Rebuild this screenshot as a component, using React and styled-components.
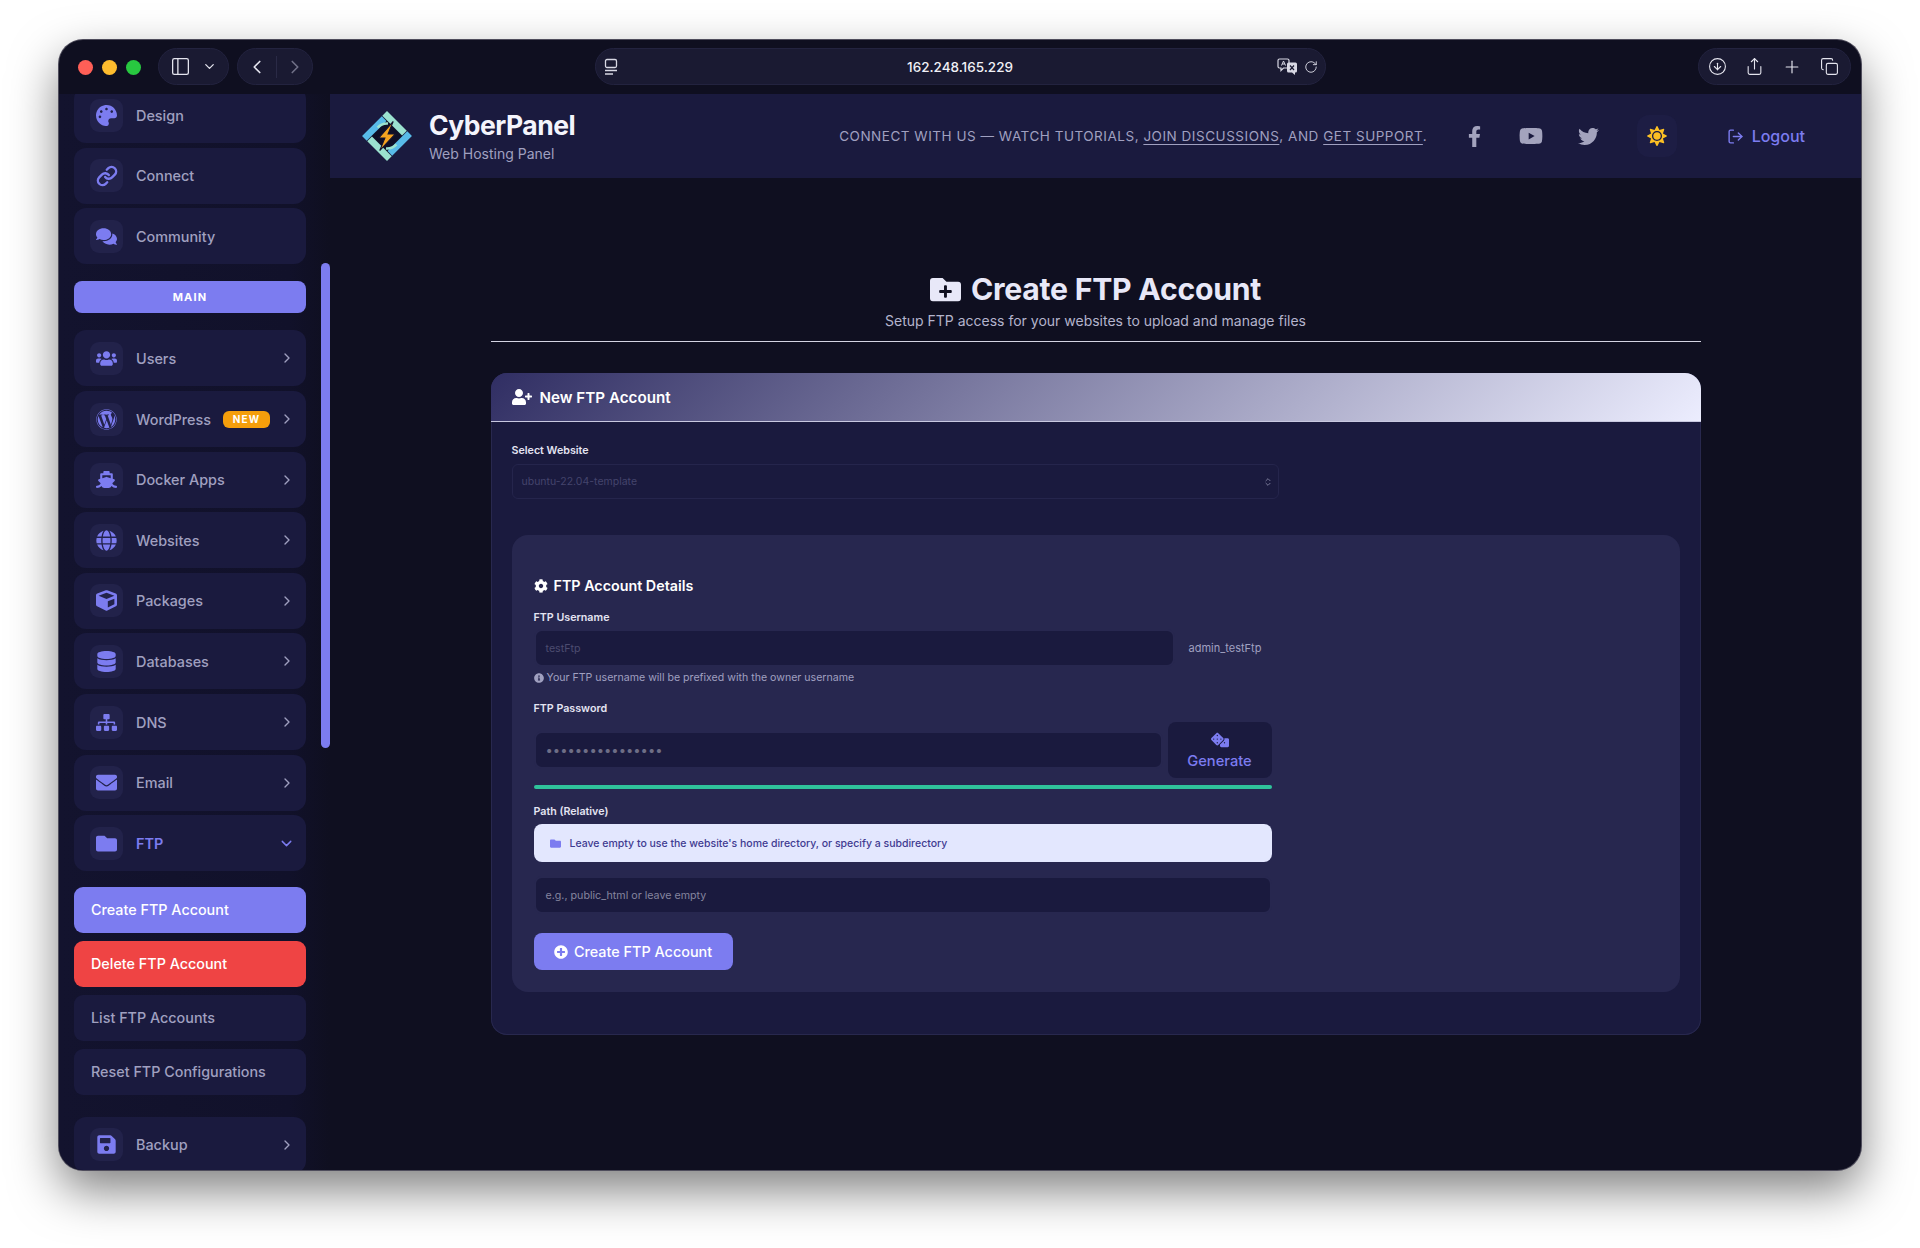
import React from 'react';
import styled, { createGlobalStyle } from 'styled-components';
import {
  FaPalette, FaComments, FaUsers, FaWordpress, FaShip, FaGlobe, FaCube, FaDatabase,
  FaSitemap, FaEnvelope, FaFolder, FaSave, FaFacebookF, FaYoutube, FaTwitter, FaSun,
  FaFolderPlus, FaUserPlus, FaCog, FaInfoCircle, FaDice, FaPlusCircle,
} from 'react-icons/fa';
import {
  PanelLeft, ChevronDown, ChevronLeft, ChevronRight, ChevronsUpDown, LogOut,
  RotateCw, Share, Plus, Copy, CircleArrowDown, Link,
} from 'lucide-react';

const accent = '#7c7cf0';
const muted = '#a0a0c0';
const cardBg = '#1a1a3e';
const panelBg = '#27274f';

const GlobalStyle = createGlobalStyle`
  html, body {
    margin: 0;
    background: #fff;
  }
  * {
    box-sizing: border-box;
  }
  body {
    font-family: Inter, "Liberation Sans", sans-serif;
  }
`;

const Page = styled.div`
  width: 1920px;
  height: 1248px;
  padding: 40px 59px 78px 59px;
  overflow: hidden;
`;

const Window = styled.div`
  height: 100%;
  display: flex;
  flex-direction: column;
  border-radius: 24px;
  overflow: hidden;
  background: #0f0f20;
  box-shadow: 0 0 0 1px #4f4d5c, 0 20px 48px rgba(0, 0, 0, 0.5);
`;

const Toolbar = styled.div`
  height: 54px;
  flex: none;
  display: flex;
  align-items: center;
  padding: 0 10px 0 19px;
`;

const Lights = styled.div`
  display: flex;
  gap: 9px;
  margin-right: 17px;
`;

const Light = styled.span`
  width: 15px;
  height: 15px;
  border-radius: 50%;
  background: ${props => props.$color};
`;

const Pill = styled.div`
  height: 37px;
  display: flex;
  align-items: center;
  border-radius: 19px;
  background: #1a1a32;
  border: 1px solid #23233f;
  color: #e4e4ee;
  margin-top: -1px;
`;

const ViewPill = styled(Pill)`
  width: 71px;
  padding: 0 11px;
  justify-content: space-between;
  margin-right: 8px;
`;

const NavPill = styled(Pill)`
  width: 76px;
  padding: 0 6px 0 8px;
  justify-content: space-between;
`;

const NavDivider = styled.span`
  width: 1px;
  height: 22px;
  background: #2a2a46;
`;

const AddressBar = styled(Pill)`
  width: 731px;
  margin-left: 282px;
  padding: 0 7px 0 7px;
  justify-content: space-between;
`;

const Url = styled.span`
  font-size: 13.5px;
  font-weight: 500;
  color: #f0f0f6;
  margin-left: 24px;
`;

const AddressIcons = styled.div`
  display: flex;
  align-items: center;
  gap: 6px;
`;

const ActionPill = styled(Pill)`
  width: 153px;
  margin-left: auto;
  justify-content: space-between;
  padding: 0 11px 0 9px;
`;

const Body = styled.div`
  flex: 1;
  min-height: 0;
  display: flex;
`;

const Sidebar = styled.aside`
  width: 271px;
  flex: none;
  position: relative;
  overflow: hidden;
  padding-left: 15px;
  background: linear-gradient(90deg, #13132e 0%, #11112a 85%, #0f0f20 100%);
`;

const SideScroll = styled.div`
  width: 232px;
  margin-top: -7px;
`;

const ScrollThumb = styled.div`
  position: absolute;
  top: 169px;
  right: 0;
  width: 9px;
  height: 485px;
  border-radius: 5px;
  background: ${accent};
`;

const NavItem = styled.div`
  height: 56px;
  margin-bottom: 4.6px;
  display: flex;
  align-items: center;
  padding: 0 11px 0 16px;
  border-radius: 12px;
  background: ${cardBg};
  color: ${props => (props.$active ? accent : muted)};
  font-size: 14.4px;
  font-weight: ${props => (props.$active ? 600 : 500)};
`;

const NavIcon = styled.span`
  width: 33px;
  height: 33px;
  flex: none;
  display: flex;
  align-items: center;
  justify-content: center;
  border-radius: 9px;
  background: #22224a;
  color: ${accent};
  font-size: 21px;
  margin-right: 13px;
`;

const NavLabel = styled.span`
  margin-right: auto;
`;

const NewBadge = styled.span`
  width: 47px;
  height: 17px;
  display: flex;
  align-items: center;
  justify-content: center;
  margin-right: 9px;
  border-radius: 6px;
  background: #f59e0b;
  color: #fff;
  font-size: 10px;
  font-weight: 700;
  letter-spacing: 1.2px;
`;

const SectionPill = styled.div`
  height: 32px;
  margin: 17.3px 0 17px;
  display: flex;
  align-items: center;
  justify-content: center;
  border-radius: 8px;
  background: ${accent};
  color: #fff;
  font-size: 11px;
  font-weight: 700;
  letter-spacing: 1.2px;
`;

const SubMenu = styled.div`
  display: flex;
  flex-direction: column;
  gap: 8px;
  margin: 15.6px 0 22px;
`;

const SubItem = styled.div`
  height: 46px;
  display: flex;
  align-items: center;
  padding-left: 17px;
  border-radius: 9px;
  font-size: 14.35px;
  font-weight: 500;
  color: ${props => (props.$bg ? '#fff' : muted)};
  background: ${props => props.$bg || cardBg};
`;

const Main = styled.main`
  flex: 1;
  min-width: 0;
  display: flex;
  flex-direction: column;
`;

const Header = styled.header`
  height: 84px;
  flex: none;
  display: flex;
  align-items: center;
  padding: 0 56px 0 31px;
  background: ${cardBg};
`;

const Brand = styled.div`
  display: flex;
  align-items: center;
  gap: 16px;
  margin-right: 264px;
`;

const BrandName = styled.div`
  font-size: 26.5px;
  line-height: 32px;
  font-weight: 700;
  letter-spacing: -0.5px;
  color: #f4f4fc;
`;

const BrandSub = styled.div`
  margin-top: 3px;
  font-size: 14px;
  line-height: 20px;
  color: ${muted};
`;

const Tagline = styled.div`
  font-size: 13.5px;
  letter-spacing: 0.52px;
  color: ${muted};
  white-space: nowrap;

  a {
    color: inherit;
    text-decoration: underline;
    text-underline-offset: 3px;
  }
`;

const Socials = styled.div`
  display: flex;
  align-items: center;
  margin-left: 18.5px;
  color: #a3a3bd;
`;

const SocialLink = styled.span`
  width: 57px;
  display: flex;
  justify-content: center;
  font-size: ${props => props.$size}px;
`;

const ThemeToggle = styled.span`
  width: 40px;
  height: 42px;
  margin-left: 20px;
  display: flex;
  align-items: center;
  justify-content: center;
  border-radius: 12px;
  background: #1d1d44;
  color: #fbbf24;
  font-size: 20px;
`;

const Logout = styled.div`
  display: flex;
  align-items: center;
  gap: 8px;
  color: ${accent};
  font-size: 16px;
  font-weight: 500;
  margin-left: auto;
`;

const Content = styled.div`
  width: 1210px;
  margin: 0 auto;
  padding-top: 91px;
`;

const PageHead = styled.div`
  text-align: center;
  padding-bottom: 10px;
  border-bottom: 1px solid #d4d4e2;
  margin-bottom: 31px;
`;

const PageTitle = styled.h1`
  margin: 0;
  display: flex;
  align-items: center;
  justify-content: center;
  gap: 10px;
  font-size: 30.2px;
  line-height: 40px;
  font-weight: 700;
  letter-spacing: -0.25px;
  color: #e8e8f8;
`;

const PageSub = styled.p`
  margin: 2px 0 0;
  font-size: 14px;
  line-height: 20px;
  color: #b4b4cc;
`;

const Card = styled.section`
  height: 662px;
  border-radius: 16px;
  overflow: hidden;
  background: ${cardBg};
  box-shadow: inset 0 0 0 1px #28284e;
`;

const CardHead = styled.div`
  height: 49px;
  display: flex;
  align-items: center;
  gap: 8px;
  padding-left: 21px;
  font-size: 15.2px;
  font-weight: 600;
  color: #fff;
  background: linear-gradient(135deg, #302e63 0%, #ecedfe 100%);
  border-bottom: 1px solid #c8c8e0;
`;

const CardBody = styled.div`
  padding: 22px 21px 0;
`;

const Label = styled.div`
  font-size: 10.7px;
  line-height: 14px;
  font-weight: 600;
  color: #e4e4f2;
  margin-bottom: ${props => props.$gap ?? 6}px;
`;

const Select = styled.div`
  width: 767px;
  height: 35px;
  display: flex;
  align-items: center;
  justify-content: space-between;
  padding: 0 5px 0 9px;
  border-radius: 6px;
  border: 1px solid #25254c;
  font-size: 10.5px;
  color: #44446c;
`;

const Panel = styled.div`
  height: 457px;
  margin-top: 36px;
  padding: 41px 22px 0;
  border-radius: 16px;
  background: ${panelBg};
`;

const Form = styled.div`
  width: 738px;
`;

const PanelTitle = styled.h3`
  margin: 0 0 15px;
  display: flex;
  align-items: center;
  gap: 6px;
  font-size: 14.3px;
  line-height: 20px;
  font-weight: 600;
  color: #fff;
`;

const Row = styled.div`
  display: flex;
  align-items: center;
`;

const Field = styled.div`
  height: 38px;
  flex: 1;
  display: flex;
  align-items: center;
  padding-left: 10px;
  border-radius: 8px;
  border: 2px solid ${panelBg};
  background: ${cardBg};
  font-size: 10.7px;
  color: ${props => props.$color};
`;

const PasswordField = styled(Field)`
  font-size: 13px;
  color: #6e6e86;
`;

const Addon = styled.span`
  width: 97px;
  flex: none;
  padding-left: 14px;
  font-size: 11px;
  color: ${muted};
`;

const Hint = styled.div`
  margin: 4px 0 17px;
  display: flex;
  align-items: center;
  gap: 3px;
  font-size: 10.6px;
  line-height: 14px;
  color: ${muted};
`;

const GenerateButton = styled.div`
  width: 104px;
  height: 56px;
  flex: none;
  margin-left: 5px;
  display: flex;
  flex-direction: column;
  align-items: center;
  justify-content: center;
  gap: 3px;
  border-radius: 8px;
  background: ${cardBg};
  color: ${accent};
  font-size: 14.7px;
  font-weight: 500;
`;

const Strength = styled.div`
  height: 4px;
  margin: 7px 0 16px;
  border-radius: 2px;
  background: #2fc39b;
`;

const InfoBox = styled.div`
  height: 38px;
  display: flex;
  align-items: center;
  gap: 9px;
  padding-left: 16px;
  border-radius: 8px;
  background: #e3e7fe;
  color: #3f3b91;
  font-size: 10.5px;
  font-weight: 500;
  margin-bottom: 14px;
`;

const SubmitButton = styled.div`
  width: 199px;
  height: 37px;
  margin-top: 19px;
  display: flex;
  align-items: center;
  justify-content: center;
  gap: 6px;
  border-radius: 8px;
  background: ${accent};
  color: #fff;
  font-size: 14.4px;
  font-weight: 500;
`;

const CyberLogo = () => (
  <svg width="52" height="52" viewBox="0 0 50 50">
    <circle cx="25" cy="25" r="17" fill="#0f0f26" />
    {[0, 90, 180, 270].map((angle, i) => (
      <polygon
        key={angle}
        points="1,25 20,6 24.5,10.5 5.5,29.5"
        fill={i % 2 ? '#9be2cf' : '#58bbe8'}
        transform={`rotate(${angle} 25 25)`}
      />
    ))}
    <path d="M16 17a12 12 0 0 1 10-4M34 33a12 12 0 0 1-10 4" fill="none" stroke="#9be2cf" strokeWidth="2.5" />
    <polygon points="31,11 17,27 23,27 18,39 33,23 26,23" fill="#f5a31f" stroke="#14142e" strokeWidth="1" />
  </svg>
);

const ReaderIcon = () => (
  <svg width="16" height="18" viewBox="0 0 16 18" fill="none" stroke="#d8d8e4" strokeWidth="1.3">
    <rect x="2.5" y="1.5" width="11" height="8" rx="1.5" />
    <path d="M2 12.5h12M2 16h8" />
  </svg>
);

const TranslateIcon = () => (
  <svg width="21" height="17" viewBox="0 0 21 17">
    <path d="M2.5 1h8A1.5 1.5 0 0 1 12 2.5v6A1.5 1.5 0 0 1 10.5 10h-4L4 12.5V10H2.5A1.5 1.5 0 0 1 1 8.5v-6A1.5 1.5 0 0 1 2.5 1z" fill="none" stroke="#d8d8e4" strokeWidth="1.2" />
    <path d="M4.5 7.5l2-4.500 2 4.500M5.3 6h2.400" fill="none" stroke="#d8d8e4" strokeWidth="1" />
    <path d="M11.5 4.5h7A1.5 1.5 0 0 1 20 6v7a1.5 1.5 0 0 1-1.5 1.5H18V17l-3-2.5h-3.5A1.5 1.5 0 0 1 10 13V6a1.5 1.5 0 0 1 1.5-1.5z" fill="#d8d8e4" />
    <path d="M13 7.500l4 4.500M17 7.500l-4 4.500" stroke="#1a1a32" strokeWidth="1.2" />
  </svg>
);

const ConnectIcon = () => <Link size={22} strokeWidth={2.6} />;

const topItems = [
  { label: 'Design', icon: FaPalette },
  { label: 'Connect', icon: ConnectIcon },
  { label: 'Community', icon: FaComments },
];

const mainItems = [
  { label: 'Users', icon: FaUsers },
  { label: 'WordPress', icon: FaWordpress, badge: 'NEW' },
  { label: 'Docker Apps', icon: FaShip },
  { label: 'Websites', icon: FaGlobe },
  { label: 'Packages', icon: FaCube },
  { label: 'Databases', icon: FaDatabase },
  { label: 'DNS', icon: FaSitemap },
  { label: 'Email', icon: FaEnvelope },
];

const subItems = [
  { label: 'Create FTP Account', bg: accent },
  { label: 'Delete FTP Account', bg: '#ef4444' },
  { label: 'List FTP Accounts' },
  { label: 'Reset FTP Configurations' },
];

const SideLink = ({ item, chevron, active }) => {
  const Icon = item.icon;
  return (
    <NavItem $active={active}>
      <NavIcon><Icon /></NavIcon>
      <NavLabel>{item.label}</NavLabel>
      {item.badge && <NewBadge>{item.badge}</NewBadge>}
      {chevron === 'right' && <ChevronRight size={16} />}
      {chevron === 'down' && <ChevronDown size={17} />}
    </NavItem>
  );
};

const App = () => (
  <Page>
    <GlobalStyle />
    <Window>
      <Toolbar>
        <Lights>
          <Light $color="#ff5f57" />
          <Light $color="#febc2e" />
          <Light $color="#28c840" />
        </Lights>
        <ViewPill>
          <PanelLeft size={21} strokeWidth={1.5} />
          <ChevronDown size={15} />
        </ViewPill>
        <NavPill>
          <ChevronLeft size={22} strokeWidth={1.8} />
          <NavDivider />
          <ChevronRight size={22} strokeWidth={1.8} color="#6f6f86" />
        </NavPill>
        <AddressBar>
          <ReaderIcon />
          <Url>162.248.165.229</Url>
          <AddressIcons>
            <TranslateIcon />
            <RotateCw size={14} strokeWidth={1.5} />
          </AddressIcons>
        </AddressBar>
        <ActionPill>
          <CircleArrowDown size={19} strokeWidth={1.4} />
          <Share size={19} strokeWidth={1.4} />
          <Plus size={20} strokeWidth={1.4} />
          <Copy size={19} strokeWidth={1.4} />
        </ActionPill>
      </Toolbar>
      <Body>
        <Sidebar>
          <SideScroll>
            {topItems.map(item => <SideLink key={item.label} item={item} />)}
            <SectionPill>MAIN</SectionPill>
            {mainItems.map(item => <SideLink key={item.label} item={item} chevron="right" />)}
            <SideLink item={{ label: 'FTP', icon: FaFolder }} chevron="down" active />
            <SubMenu>
              {subItems.map(item => <SubItem key={item.label} $bg={item.bg}>{item.label}</SubItem>)}
            </SubMenu>
            <SideLink item={{ label: 'Backup', icon: FaSave }} chevron="right" />
          </SideScroll>
          <ScrollThumb />
        </Sidebar>
        <Main>
          <Header>
            <Brand>
              <CyberLogo />
              <div>
                <BrandName>CyberPanel</BrandName>
                <BrandSub>Web Hosting Panel</BrandSub>
              </div>
            </Brand>
            <Tagline>
              CONNECT WITH US — WATCH TUTORIALS, <a>JOIN DISCUSSIONS</a>, AND <a>GET SUPPORT</a>.
            </Tagline>
            <Socials>
              <SocialLink $size={21}><FaFacebookF /></SocialLink>
              <SocialLink $size={24}><FaYoutube /></SocialLink>
              <SocialLink $size={21}><FaTwitter /></SocialLink>
            </Socials>
            <ThemeToggle><FaSun /></ThemeToggle>
            <Logout>
              <LogOut size={17} />
              Logout
            </Logout>
          </Header>
          <Content>
            <PageHead>
              <PageTitle><FaFolderPlus size={31} />Create FTP Account</PageTitle>
              <PageSub>Setup FTP access for your websites to upload and manage files</PageSub>
            </PageHead>
            <Card>
              <CardHead><FaUserPlus size={20} />New FTP Account</CardHead>
              <CardBody>
                <Label>Select Website</Label>
                <Select>
                  ubuntu-22.04-template
                  <ChevronsUpDown size={10} color="#8a8aa8" />
                </Select>
                <Panel>
                  <Form>
                    <PanelTitle><FaCog size={14} />FTP Account Details</PanelTitle>
                    <Label $gap={4}>FTP Username</Label>
                    <Row>
                      <Field $color="#4c4c70">testFtp</Field>
                      <Addon>admin_testFtp</Addon>
                    </Row>
                    <Hint><FaInfoCircle size={10} />Your FTP username will be prefixed with the owner username</Hint>
                    <Label $gap={6}>FTP Password</Label>
                    <Row>
                      <PasswordField>••••••••••••••••</PasswordField>
                      <GenerateButton>
                        <FaDice size={18} />
                        Generate
                      </GenerateButton>
                    </Row>
                    <Strength />
                    <Label $gap={5}>Path (Relative)</Label>
                    <InfoBox><FaFolder size={11} color={accent} />Leave empty to use the website's home directory, or specify a subdirectory</InfoBox>
                    <Field $color="#85859f">e.g., public_html or leave empty</Field>
                    <SubmitButton><FaPlusCircle size={14} />Create FTP Account</SubmitButton>
                  </Form>
                </Panel>
              </CardBody>
            </Card>
          </Content>
        </Main>
      </Body>
    </Window>
  </Page>
);

export default App;
